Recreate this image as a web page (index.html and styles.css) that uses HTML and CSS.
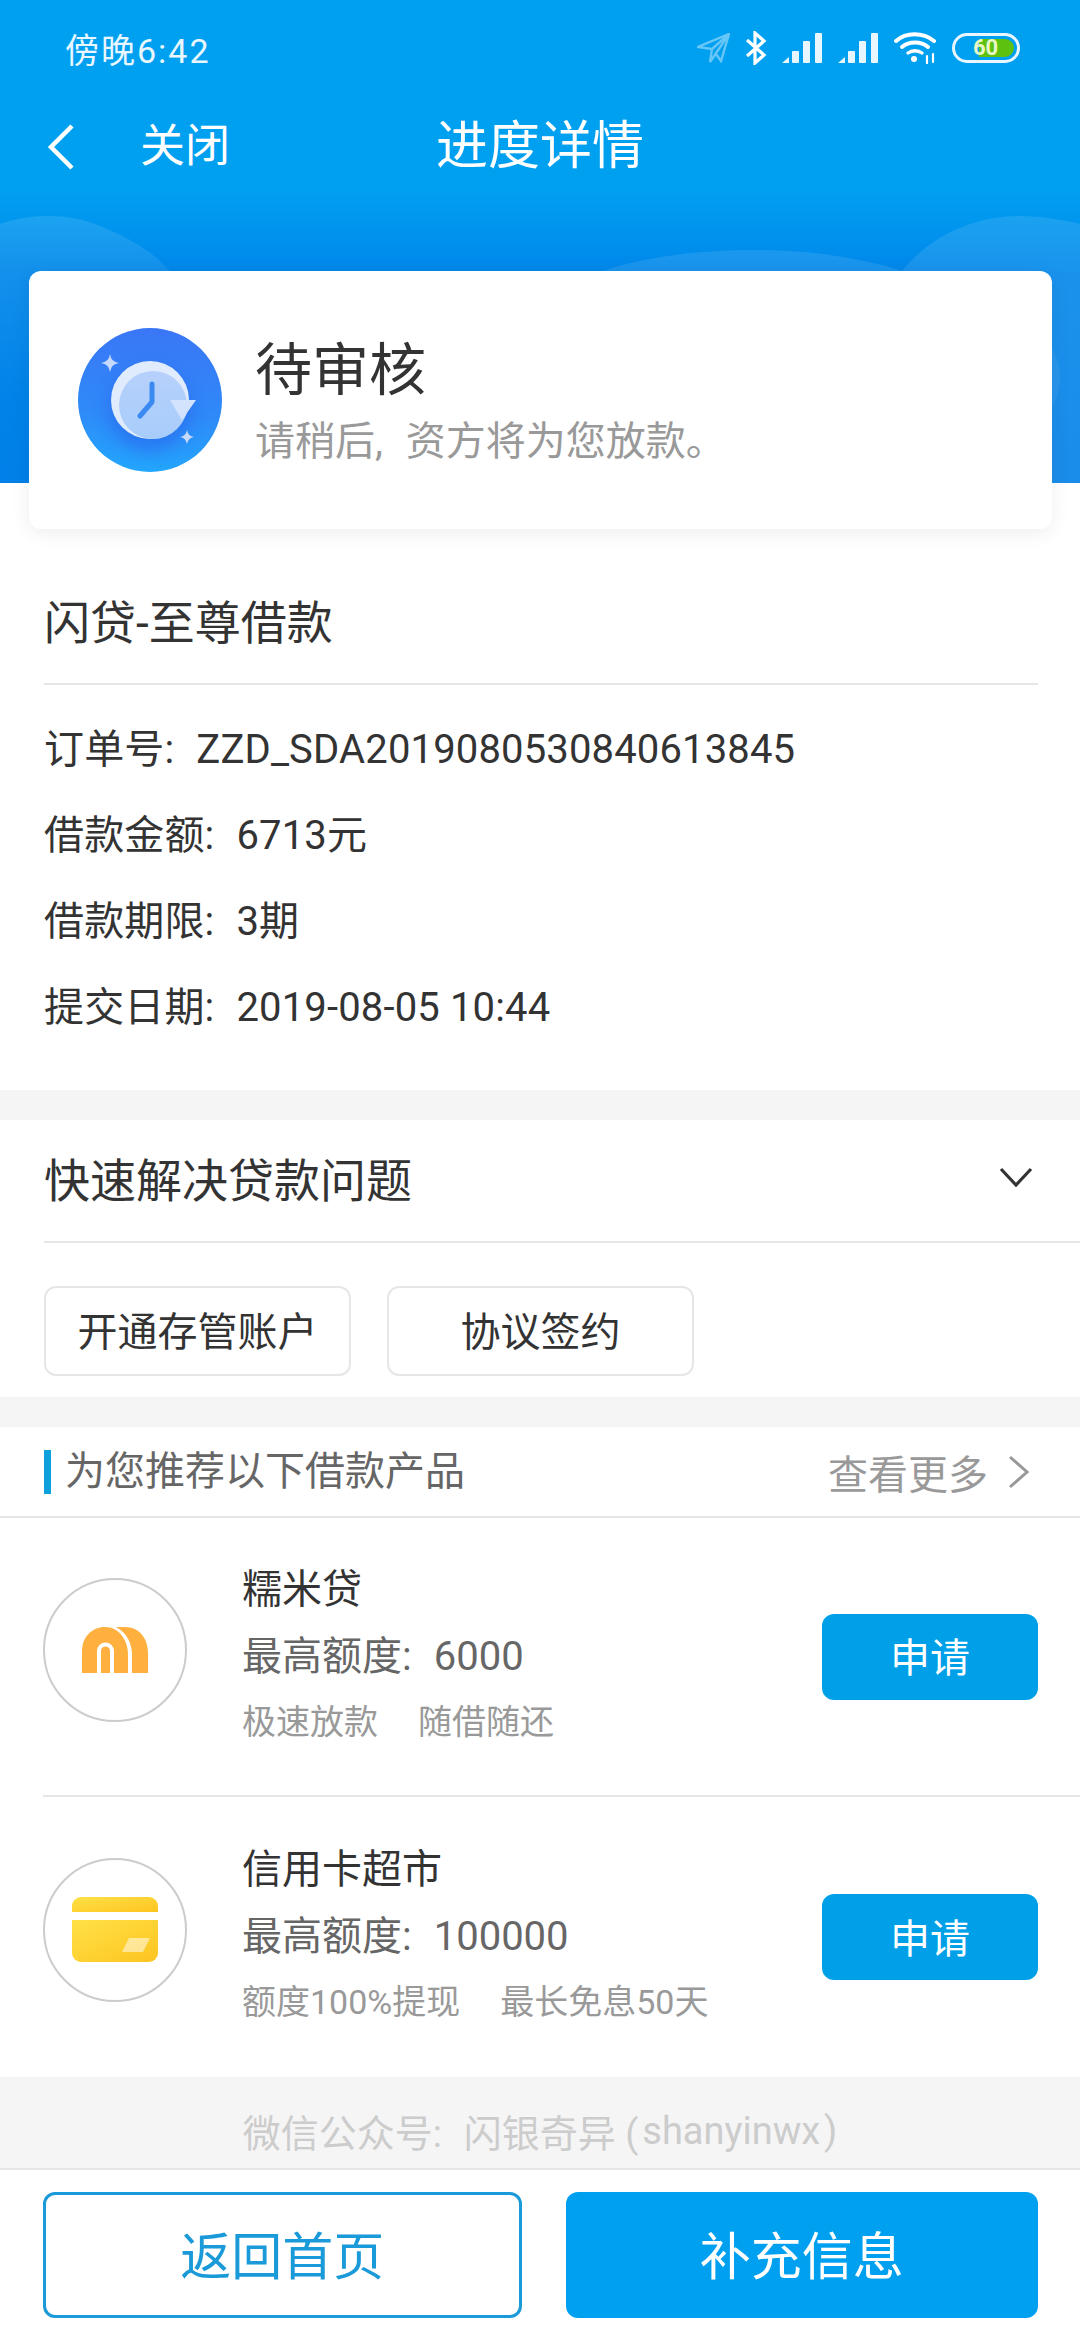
FILE: index.html
```html
<!DOCTYPE html>
<html lang="zh-CN">
  <head>
    <meta charset="UTF-8" />
    <meta name="viewport" content="width=device-width, initial-scale=1.0" />
    <title>进度详情</title>
    <link rel="stylesheet" href="styles.css">
  </head>
  <body>
    <div class="page">
      <header class="header">
        <!-- Background humps -->
        <svg class="waves" width="1080" height="483" viewBox="0 0 1080 483">
          <defs>
            <linearGradient id="humpFade" x1="0" y1="0" x2="0" y2="1">
              <stop offset="0" stop-color="#fff" stop-opacity="0.11"/>
              <stop offset="0.7" stop-color="#fff" stop-opacity="0"/>
            </linearGradient>
          </defs>
          <path d="M0 224C30 213 70 213 100 226C140 242 170 262 190 300V483H0Z" fill="url(#humpFade)"/>
          <path d="M892 285C920 240 970 215 1023 216C1045 217 1065 220 1080 224V483H892Z" fill="#fff" opacity="0.1"/>
          <path d="M600 272C660 250 760 245 830 255C870 261 900 268 925 280V330H600Z" fill="#fff" opacity="0.1"/>
          <circle cx="1000" cy="378" r="60" fill="#fff" opacity="0.06"/>
        </svg>

        <div class="statusbar">
          <span class="time">傍晚6:42</span>
          <div class="status-icons">
            <svg width="33" height="30" viewBox="0 0 33 30" fill="none" stroke="#fff" stroke-width="2.4" opacity="0.4">
              <path d="M32 1L1 14L15 16L13 29Z"/>
              <path d="M32 1L15 16M32 1L24 28L19 21"/>
            </svg>
            <svg width="22" height="34" viewBox="0 0 22 34" fill="none" stroke="#fff" stroke-width="3.2">
              <path d="M2 9L19 24L10 32V2L19 10L2 25"/>
            </svg>
            <svg width="41" height="30" viewBox="0 0 41 30" fill="#e8f7ff">
              <path d="M0 30L7 24V30Z"/>
              <rect x="10" y="18" width="7" height="12" rx="1"/>
              <rect x="21" y="8" width="7" height="22" rx="1"/>
              <rect x="33" y="0" width="7" height="30" rx="1"/>
            </svg>
            <svg width="41" height="30" viewBox="0 0 41 30" fill="#e8f7ff">
              <path d="M0 30L7 24V30Z"/>
              <rect x="10" y="18" width="7" height="12" rx="1"/>
              <rect x="21" y="8" width="7" height="22" rx="1"/>
              <rect x="33" y="0" width="7" height="30" rx="1"/>
            </svg>
            <svg width="43" height="32" viewBox="0 0 43 32" fill="none" stroke="#fff" stroke-width="4" stroke-linecap="round">
              <path d="M2 9C12 0 29 0 40 9"/>
              <path d="M8 15C15 9 27 9 34 15"/>
              <path d="M14 21C18 18 24 18 28 21" stroke-width="3.4"/>
              <circle cx="20" cy="27" r="3" fill="#fff" stroke="none"/>
              <path d="M33 24V31M39 22V30" stroke-width="2.2"/>
            </svg>
            <div class="battery">
              <div class="battery-fill"></div>
              <span class="battery-num">60</span>
            </div>
          </div>
        </div>

        <nav class="navbar">
          <svg class="nav-back" width="30" height="46" viewBox="0 0 30 46" fill="none" stroke="#fff" stroke-width="4.5">
            <path d="M26 2L5 23L26 44"/>
          </svg>
          <span class="nav-close">关闭</span>
          <span class="nav-title">进度详情</span>
        </nav>
      </header>

      <section class="status-card">
        <svg width="144" height="144" viewBox="0 0 144 144">
          <defs>
            <linearGradient id="clockBg" x1="0.55" y1="0" x2="0.5" y2="1">
              <stop offset="0" stop-color="#3a76f6"/>
              <stop offset="0.6" stop-color="#2f8af8"/>
              <stop offset="1" stop-color="#22a6fd"/>
            </linearGradient>
            <linearGradient id="clockFace" x1="0" y1="0" x2="0" y2="1">
              <stop offset="0" stop-color="#b6d0fb"/>
              <stop offset="1" stop-color="#a8cdfb"/>
            </linearGradient>
            <filter id="clockShadow" x="-30%" y="-30%" width="160%" height="160%">
              <feGaussianBlur stdDeviation="8"/>
            </filter>
            <clipPath id="clockClip">
              <circle cx="72" cy="72" r="72"/>
            </clipPath>
          </defs>
          <circle cx="72" cy="72" r="72" fill="url(#clockBg)"/>
          <g clip-path="url(#clockClip)">
            <circle cx="72" cy="82" r="42" fill="#2b62ec" opacity="0.55" filter="url(#clockShadow)"/>
          </g>
          <circle cx="72" cy="72" r="39" fill="#e0ebfd"/>
          <circle cx="75" cy="77" r="34" fill="url(#clockFace)"/>
          <path d="M92 72L118 72L104 92Z" fill="#d3e3fd"/>
          <path d="M74 56V74L62 88" fill="none" stroke="#3b8af2" stroke-width="5" stroke-linecap="round" stroke-linejoin="round"/>
          <path d="M32 26Q33 34 41 35Q33 36 32 44Q31 36 23 35Q31 34 32 26Z" fill="#c6dafb"/>
          <path d="M109 102Q110 108 116 109Q110 110 109 116Q108 110 102 109Q108 108 109 102Z" fill="#c6dafb"/>
        </svg>
        <div class="status-text">
          <div class="status-title">待审核</div>
          <div class="status-sub">请稍后, 资方将为您放款。</div>
        </div>
      </section>

      <section class="order">
        <h2 class="order-name">闪贷-至尊借款</h2>
        <div class="order-rows">
          <div><span class="label">订单号:</span>ZZD_SDA2019080530840613845</div>
          <div><span class="label">借款金额:</span>6713元</div>
          <div><span class="label">借款期限:</span>3期</div>
          <div><span class="label">提交日期:</span>2019-08-05 10:44</div>
        </div>
      </section>

      <section class="quick">
        <div class="quick-head">
          <span>快速解决贷款问题</span>
          <svg width="34" height="20" viewBox="0 0 34 20" fill="none" stroke="#333" stroke-width="3.2">
            <path d="M2 2L17 18L32 2"/>
          </svg>
        </div>
        <div class="quick-btns">
          <a href="#" class="quick-btn">开通存管账户</a>
          <a href="#" class="quick-btn">协议签约</a>
        </div>
      </section>

      <section class="recommend">
        <div class="rec-head">
          <span class="rec-title">为您推荐以下借款产品</span>
          <span class="rec-more">查看更多</span>
          <svg width="22" height="34" viewBox="0 0 22 34" fill="none" stroke="#999" stroke-width="3">
            <path d="M2 2L19 17L2 32"/>
          </svg>
        </div>

        <div class="product">
          <svg class="product-logo" width="144" height="144" viewBox="0 0 144 144">
            <circle cx="72" cy="72" r="71" fill="#fff" stroke="#ccc" stroke-width="2"/>
            <path d="M39 95V73C39 59 49 49 62 49C76 49 85 62 85 77V95Z" fill="#ffb03f"/>
            <path d="M56 95V73a6 6 0 0 1 13 0V95" fill="none" stroke="#fff" stroke-width="4"/>
            <path d="M73 49H82C96 49 105 60 105 75V95H89V77C89 65 84 55 73 49Z" fill="#ffb03f"/>
          </svg>
          <div class="product-info">
            <div class="product-name">糯米贷</div>
            <div class="product-limit"><span class="label">最高额度:</span>6000</div>
            <div class="product-tags"><span>极速放款</span><span>随借随还</span></div>
          </div>
          <a href="#" class="apply-btn">申请</a>
        </div>

        <div class="product">
          <svg class="product-logo" width="144" height="144" viewBox="0 0 144 144">
            <defs>
              <linearGradient id="cardBg" x1="0" y1="0" x2="1" y2="1">
                <stop offset="0" stop-color="#ffe146"/>
                <stop offset="1" stop-color="#fdc421"/>
              </linearGradient>
            </defs>
            <circle cx="72" cy="72" r="71" fill="#fff" stroke="#ccc" stroke-width="2"/>
            <path d="M29 54V48a9 9 0 0 1 9-9H106a9 9 0 0 1 9 9V54Z" fill="url(#cardBg)"/>
            <path d="M29 62H115V95a9 9 0 0 1-9 9H38a9 9 0 0 1-9-9Z" fill="url(#cardBg)"/>
            <path d="M86 80H107L100 94H79Z" fill="#fff" opacity="0.5"/>
          </svg>
          <div class="product-info">
            <div class="product-name">信用卡超市</div>
            <div class="product-limit"><span class="label">最高额度:</span>100000</div>
            <div class="product-tags"><span>额度100%提现</span><span>最长免息50天</span></div>
          </div>
          <a href="#" class="apply-btn">申请</a>
        </div>
      </section>

      <div class="wechat"><span class="label">微信公众号:</span>闪银奇异 (<span class="handle">shanyinwx</span>)</div>

      <footer class="footer">
        <a href="#" class="footer-btn outline">返回首页</a>
        <a href="#" class="footer-btn solid">补充信息</a>
      </footer>
    </div>
  </body>
</html>
```

FILE: styles.css
```css
* {
  box-sizing: border-box;
}

body {
  margin: 0;
  padding: 0;
  background-color: #fff;
  font-family: Roboto, "Noto Sans CJK SC", sans-serif;
  color: #333;
}

a {
  text-decoration: none;
}

.label {
  margin-right: 22px;
}

.page {
  width: 1080px;
  height: 2340px;
  overflow: hidden;
}

.header {
  position: relative;
  height: 483px;
  background: linear-gradient(180deg, #00a0f1 0, #00a0f1 190px, #0086ea 275px, #0080e8 483px);
  color: #fff;
}

.waves {
  position: absolute;
  left: 0;
  top: 0;
}

.statusbar {
  position: relative;
  height: 96px;
  display: flex;
  align-items: center;
  justify-content: space-between;
  padding: 0 60px 0 65px;
}

.time {
  font-size: 34px;
  letter-spacing: 2px;
  color: #e8f7ff;
}

.status-icons {
  display: flex;
  align-items: center;
  gap: 15px;
}

.battery {
  position: relative;
  width: 68px;
  height: 30px;
  border: 3px solid #e8f7ff;
  border-radius: 15px;
  padding: 3px;
}

.battery-fill {
  margin-left: 21px;
  width: 35px;
  height: 18px;
  background-color: #5cc10f;
  border-radius: 0 9px 9px 0;
}

.battery-num {
  position: absolute;
  left: 18px;
  top: -1px;
  font-size: 22px;
  line-height: 26px;
  font-weight: 700;
  color: #e9f7c8;
}

.navbar {
  position: relative;
  height: 98px;
  display: flex;
  align-items: center;
  padding: 4px 0 0 46px;
}

.nav-close {
  margin-left: 64px;
  font-size: 45px;
  line-height: 60px;
}

.nav-title {
  margin-left: 206px;
  font-size: 52px;
  line-height: 70px;
}

.status-card {
  position: relative;
  margin: -212px 28px 0 29px;
  height: 258px;
  padding-left: 49px;
  display: flex;
  align-items: center;
  gap: 33px;
  background-color: #fff;
  border-radius: 12px;
  box-shadow: 0 4px 20px rgba(0, 0, 0, 0.07);
}

.status-title {
  margin-top: 5px;
  font-size: 57px;
  line-height: 70px;
}

.status-sub {
  margin-top: 9px;
  font-size: 40px;
  line-height: 54px;
  word-spacing: 13px;
  color: #999;
}

.order {
  padding: 62px 42px 0 44px;
  height: 591px;
  border-bottom: 30px solid #f5f5f5;
}

.order-name {
  margin: 0;
  height: 94px;
  font-size: 46px;
  font-weight: 400;
  line-height: 64px;
  border-bottom: 2px solid #e6e6e6;
}

.order-rows {
  padding-top: 22px;
  font-size: 40px;
  line-height: 86px;
  letter-spacing: 0.15px;
}

.quick {
  height: 307px;
  padding-left: 44px;
  border-bottom: 30px solid #f5f5f5;
}

.quick-head {
  height: 123px;
  padding: 0 47px 8px 0;
  display: flex;
  align-items: center;
  justify-content: space-between;
  font-size: 46px;
  border-bottom: 2px solid #e6e6e6;
}

.quick-btns {
  display: flex;
  gap: 36px;
  padding-top: 43px;
}

.quick-btn {
  width: 307px;
  height: 90px;
  padding-bottom: 5px;
  display: flex;
  align-items: center;
  justify-content: center;
  font-size: 40px;
  color: #333;
  border: 2px solid #e6e6e6;
  border-radius: 12px;
}

.rec-head {
  height: 91px;
  padding: 0 50px 0 44px;
  display: flex;
  align-items: center;
  font-size: 40px;
  border-bottom: 2px solid #e6e6e6;
}

.rec-title {
  flex: 1;
  padding-left: 14px;
  line-height: 44px;
  color: #666;
  border-left: 7px solid #0ea0dc;
}

.rec-more {
  margin-right: 20px;
  color: #999;
}

.product {
  height: 279px;
  margin-left: 43px;
  padding-right: 42px;
  display: flex;
  align-items: center;
  border-bottom: 2px solid #e6e6e6;
}

.product:last-child {
  height: 280px;
  border-bottom: none;
}

.product-logo {
  flex: none;
  margin-bottom: 14px;
}

.product-info {
  flex: 1;
  margin-left: 55px;
}

.product-name {
  margin-bottom: 4px;
  font-size: 40px;
  line-height: 54px;
}

.product-limit {
  font-size: 40px;
  line-height: 72px;
  color: #666;
}

.product-tags {
  display: flex;
  gap: 40px;
  font-size: 34px;
  line-height: 58px;
  color: #999;
}

.apply-btn {
  width: 216px;
  height: 86px;
  padding-bottom: 3px;
  display: flex;
  align-items: center;
  justify-content: center;
  font-size: 40px;
  color: #fff;
  background-color: #00a0e9;
  border-radius: 12px;
}

.wechat {
  height: 93px;
  padding-top: 16px;
  display: flex;
  align-items: center;
  justify-content: center;
  font-size: 38px;
  white-space: pre;
  color: #ccc;
  background-color: #f5f5f5;
  border-bottom: 2px solid #e6e6e6;
}

.handle {
  margin: 0 4px;
}

.footer {
  display: flex;
  gap: 44px;
  padding: 22px 42px 0 43px;
}

.footer-btn {
  flex: 1;
  height: 126px;
  padding-bottom: 5px;
  display: flex;
  align-items: center;
  justify-content: center;
  font-size: 51px;
  border-radius: 12px;
}

.outline {
  color: #1a9ad9;
  border: 3px solid #1a9ad9;
}

.solid {
  color: #fff;
  background-color: #00a0f0;
}
```
